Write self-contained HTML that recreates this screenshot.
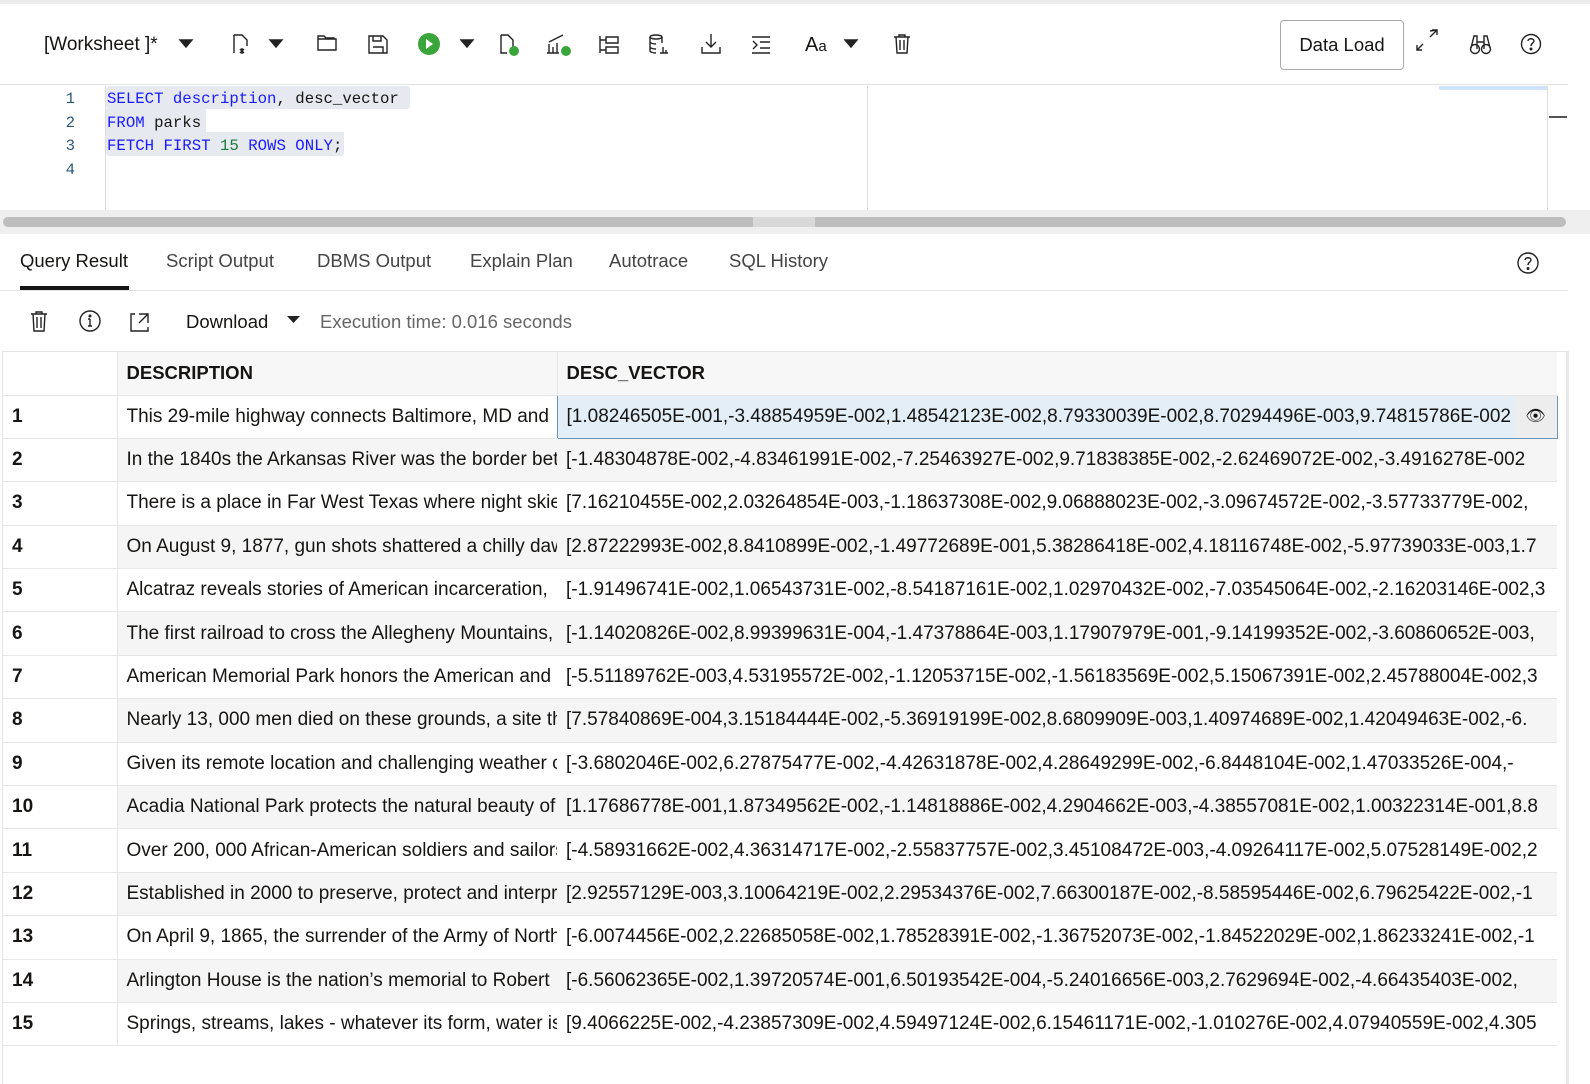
<!DOCTYPE html>
<html><head><meta charset="utf-8"><style>
*{box-sizing:border-box;margin:0;padding:0}
body{width:1590px;height:1084px;background:#fff;font-family:"Liberation Sans",sans-serif;color:#161513;position:relative;overflow:hidden}
.abs{position:absolute}
.code{font-family:"Liberation Mono",monospace;font-size:15.7px}
.kw{color:#1a1aff}
.tab{position:absolute;top:250px;font-size:18.5px;color:#444}
table{position:absolute;left:3px;top:352px;width:1554px;border-collapse:collapse;font-size:19px;table-layout:fixed}
td,th{height:43.4px;white-space:nowrap;overflow:hidden;padding:0 9px;text-align:left;border-bottom:1px solid #e6e6e6}
th{background:#f7f7f7;font-weight:bold;height:43px;font-size:18.5px}
td.n{font-weight:bold;background:#fff;border-right:1px solid #e6e6e6}
tr.e td{background:#f5f5f5}
tr.e td.n{background:#fff}
</style></head><body>
<div class="abs" style="left:0;top:0;width:1590px;height:4px;background:#ececec"></div>
<div class="abs" style="left:0;top:84px;width:1568px;height:1px;background:#e4e4e4"></div>
<div class="abs" style="left:44px;top:34px;font-size:19px">[Worksheet ]*</div>
<svg class="abs" style="left:0;top:0" width="940" height="80" fill="none" stroke="#222" stroke-width="1.4">
<path d="M180 40h12l-6 7z" fill="#222"/>
<path d="M234 35v18M234 35h8l5 5v6M240 49l4 4M244 49l-4 4M242 48v6"/>
<path d="M270 40h12l-6 7z" fill="#222"/>
<path d="M318 39h18v11h-18zM318 39v-3h6l2 2h8v1"/>
<path d="M369 36h14l4 4v13h-18zM373 36v5h8v-5M373 47h10v6"/>
<circle cx="429" cy="44" r="11" fill="#3aa53a" stroke="none"/><path d="M426 39l7 5-7 5z" fill="#fff" stroke="none"/>
<path d="M461 40h12l-6 7z" fill="#222"/>
<path d="M501 35h7l5 5v7M501 35v18h6"/><circle cx="514" cy="51" r="5" fill="#3aa53a" stroke="none"/>
<path d="M549 53v-9M553 53v-6M557 53v-10M549 42l14-7M547 53h12"/><circle cx="566" cy="51" r="5" fill="#3aa53a" stroke="none"/>
<path d="M600 36v17M600 40h6M600 50h6M606 37h12v6h-12zM606 47h12v6h-12z"/>
<ellipse cx="656" cy="37" rx="6" ry="2"/><path d="M650 37v14c0 1 3 2 6 2M662 37v6M650 42c0 1 3 2 6 2M650 47c0 1 3 2 6 2M663 47v6M666 50v3M660 53h8"/>
<path d="M711 34v13M706 42l5 5 5-5M702 47v6h18v-6"/>
<path d="M752 37h18M752 53h18M760 42h10M760 48h10M753 41l4 4-4 4"/>
<path d="M845 40h12l-6 7z" fill="#222"/>
<path d="M894 37h16M899 37v-2h6v2M896 37l1 16h10l1-16M900 40v10M904 40v10"/>
</svg>
<div class="abs" style="left:805px;top:34px;font-size:20px">A<span style="font-size:15px">a</span></div>
<div class="abs" style="left:1280px;top:20px;width:124px;height:50px;border:1px solid #aaa;border-radius:4px;font-size:18.5px;text-align:center;line-height:48px">Data Load</div>
<svg class="abs" style="left:1410px;top:25px" width="140" height="40" fill="none" stroke="#222" stroke-width="1.4">
<path d="M13 19l-6 6M7 20v5h5M20 6l7-1M27 5l-7 7M22 5h5v5"/>
<circle cx="65" cy="24" r="4.5"/><circle cx="76" cy="24" r="4.5"/><path d="M61 23l3-12h3v13M80 23l-3-12h-3v13M67 17h7"/>
<circle cx="121" cy="19" r="9.5"/><path d="M118 16c0-3 6-3 6 0 0 2-3 2-3 5" /><circle cx="121" cy="24" r=".8" fill="#222"/>
</svg>
<div class="abs" style="left:105px;top:86px;width:1px;height:124px;background:#ddd"></div>
<div class="abs" style="left:867px;top:86px;width:1px;height:124px;background:#ddd"></div>
<div class="abs" style="left:1547px;top:86px;width:1px;height:124px;background:#ddd"></div>
<div class="abs" style="left:1439px;top:86px;width:108px;height:4px;background:#cfe3fb"></div>
<div class="abs" style="left:1549px;top:116px;width:18px;height:2px;background:#555"></div>
<div class="abs" style="left:106px;top:86px;width:304px;height:23px;background:#e6e9ef;border-radius:3px"></div>
<div class="abs" style="left:106px;top:109px;width:100px;height:23px;background:#e6e9ef"></div>
<div class="abs" style="left:106px;top:132px;width:238px;height:24px;background:#e6e9ef;border-radius:0 0 3px 3px"></div>
<div class="abs code" style="left:55px;top:88px;line-height:23.5px;color:#2d5b7a;width:20px;text-align:right">1<br>2<br>3<br>4</div>
<div class="abs code" style="left:107px;top:88px;line-height:23.5px">
<span class="kw">SELECT description</span>, desc_vector<br>
<span class="kw">FROM</span> parks<br>
<span class="kw">FETCH FIRST</span> <span style="color:#1a7a3a">15</span> <span class="kw">ROWS ONLY</span>;</div>
<div class="abs" style="left:0;top:210px;width:1590px;height:24px;background:#efefef"></div>
<div class="abs" style="left:3px;top:217px;width:1563px;height:10px;background:#bdbdbd;border-radius:5px"></div>
<div class="abs" style="left:753px;top:217px;width:62px;height:10px;background:#d8d8d8"></div>
<div class="tab" style="left:20px;color:#161513">Query Result</div>
<div class="abs" style="left:20px;top:286px;width:109px;height:4px;background:#161513"></div>
<div class="tab" style="left:166px">Script Output</div>
<div class="tab" style="left:317px">DBMS Output</div>
<div class="tab" style="left:470px">Explain Plan</div>
<div class="tab" style="left:609px">Autotrace</div>
<div class="tab" style="left:729px">SQL History</div>
<div class="abs" style="left:0;top:290px;width:1568px;height:1px;background:#e4e4e4"></div>
<svg class="abs" style="left:1515px;top:250px" width="28" height="28" fill="none" stroke="#222" stroke-width="1.4"><circle cx="13" cy="13" r="10"/><path d="M10 10c0-3 6-3 6 0 0 2-3 2-3 5"/><circle cx="13" cy="18.5" r=".8" fill="#222"/></svg>
<svg class="abs" style="left:25px;top:308px" width="135" height="28" fill="none" stroke="#222" stroke-width="1.4">
<path d="M6 6h16M11 6v-2h6v2M8 6l1 17h10l1-17M12 9v11M16 9v11"/>
<circle cx="65" cy="13" r="10"/><path d="M65 11v7M63 18h4M63 11h2"/><circle cx="65" cy="8" r=".8" fill="#222"/>
<path d="M110 6h-4v17h17v-4M114 6h9v9M123 6l-9 9"/>
</svg>
<div class="abs" style="left:186px;top:311px;font-size:18.5px">Download</div>
<svg class="abs" style="left:286px;top:314px" width="16" height="12"><path d="M1 2h13l-6.5 7z" fill="#222"/></svg>
<div class="abs" style="left:320px;top:311px;font-size:18.5px;color:#666">Execution time: 0.016 seconds</div>
<div class="abs" style="left:2px;top:351px;width:1566px;height:1px;background:#e4e4e4"></div>
<div class="abs" style="left:2px;top:351px;width:1px;height:733px;background:#e4e4e4"></div>
<div class="abs" style="left:1566px;top:351px;width:3px;height:733px;background:#e8e8e8"></div>
<table>
<colgroup><col style="width:114px"><col style="width:440px"><col style="width:1000px"></colgroup>
<tr><th style="background:#fff;border-right:1px solid #e6e6e6"></th><th style="border-right:1px solid #e6e6e6">DESCRIPTION</th><th>DESC_VECTOR</th></tr>
<tr><td class="n">1</td><td>This 29-mile highway connects Baltimore, MD and</td><td style="background:#e3eef7;border:1px solid #6a94b5;position:relative">[1.08246505E-001,-3.48854959E-002,1.48542123E-002,8.79330039E-002,8.70294496E-003,9.74815786E-002<span style="position:absolute;right:0;top:0;width:42px;height:42px;background:#ededed;text-align:center;line-height:42px;font-size:16px">&#128065;</span></td></tr>
<tr class="e"><td class="n">2</td><td>In the 1840s the Arkansas River was the border between</td><td>[-1.48304878E-002,-4.83461991E-002,-7.25463927E-002,9.71838385E-002,-2.62469072E-002,-3.4916278E-002</td></tr>
<tr><td class="n">3</td><td>There is a place in Far West Texas where night skies</td><td>[7.16210455E-002,2.03264854E-003,-1.18637308E-002,9.06888023E-002,-3.09674572E-002,-3.57733779E-002,</td></tr>
<tr class="e"><td class="n">4</td><td>On August 9, 1877, gun shots shattered a chilly dawn</td><td>[2.87222993E-002,8.8410899E-002,-1.49772689E-001,5.38286418E-002,4.18116748E-002,-5.97739033E-003,1.7</td></tr>
<tr><td class="n">5</td><td>Alcatraz reveals stories of American incarceration,</td><td>[-1.91496741E-002,1.06543731E-002,-8.54187161E-002,1.02970432E-002,-7.03545064E-002,-2.16203146E-002,3</td></tr>
<tr class="e"><td class="n">6</td><td>The first railroad to cross the Allegheny Mountains,</td><td>[-1.14020826E-002,8.99399631E-004,-1.47378864E-003,1.17907979E-001,-9.14199352E-002,-3.60860652E-003,</td></tr>
<tr><td class="n">7</td><td>American Memorial Park honors the American and</td><td>[-5.51189762E-003,4.53195572E-002,-1.12053715E-002,-1.56183569E-002,5.15067391E-002,2.45788004E-002,3</td></tr>
<tr class="e"><td class="n">8</td><td>Nearly 13, 000 men died on these grounds, a site that</td><td>[7.57840869E-004,3.15184444E-002,-5.36919199E-002,8.6809909E-003,1.40974689E-002,1.42049463E-002,-6.</td></tr>
<tr><td class="n">9</td><td>Given its remote location and challenging weather conditions</td><td>[-3.6802046E-002,6.27875477E-002,-4.42631878E-002,4.28649299E-002,-6.8448104E-002,1.47033526E-004,-</td></tr>
<tr class="e"><td class="n">10</td><td>Acadia National Park protects the natural beauty of</td><td>[1.17686778E-001,1.87349562E-002,-1.14818886E-002,4.2904662E-003,-4.38557081E-002,1.00322314E-001,8.8</td></tr>
<tr><td class="n">11</td><td>Over 200, 000 African-American soldiers and sailors</td><td>[-4.58931662E-002,4.36314717E-002,-2.55837757E-002,3.45108472E-003,-4.09264117E-002,5.07528149E-002,2</td></tr>
<tr class="e"><td class="n">12</td><td>Established in 2000 to preserve, protect and interpret</td><td>[2.92557129E-003,3.10064219E-002,2.29534376E-002,7.66300187E-002,-8.58595446E-002,6.79625422E-002,-1</td></tr>
<tr><td class="n">13</td><td>On April 9, 1865, the surrender of the Army of Northern</td><td>[-6.0074456E-002,2.22685058E-002,1.78528391E-002,-1.36752073E-002,-1.84522029E-002,1.86233241E-002,-1</td></tr>
<tr class="e"><td class="n">14</td><td>Arlington House is the nation’s memorial to Robert</td><td>[-6.56062365E-002,1.39720574E-001,6.50193542E-004,-5.24016656E-003,2.7629694E-002,-4.66435403E-002,</td></tr>
<tr><td class="n">15</td><td>Springs, streams, lakes - whatever its form, water is</td><td>[9.4066225E-002,-4.23857309E-002,4.59497124E-002,6.15461171E-002,-1.010276E-002,4.07940559E-002,4.305</td></tr>
</table>
</body></html>
